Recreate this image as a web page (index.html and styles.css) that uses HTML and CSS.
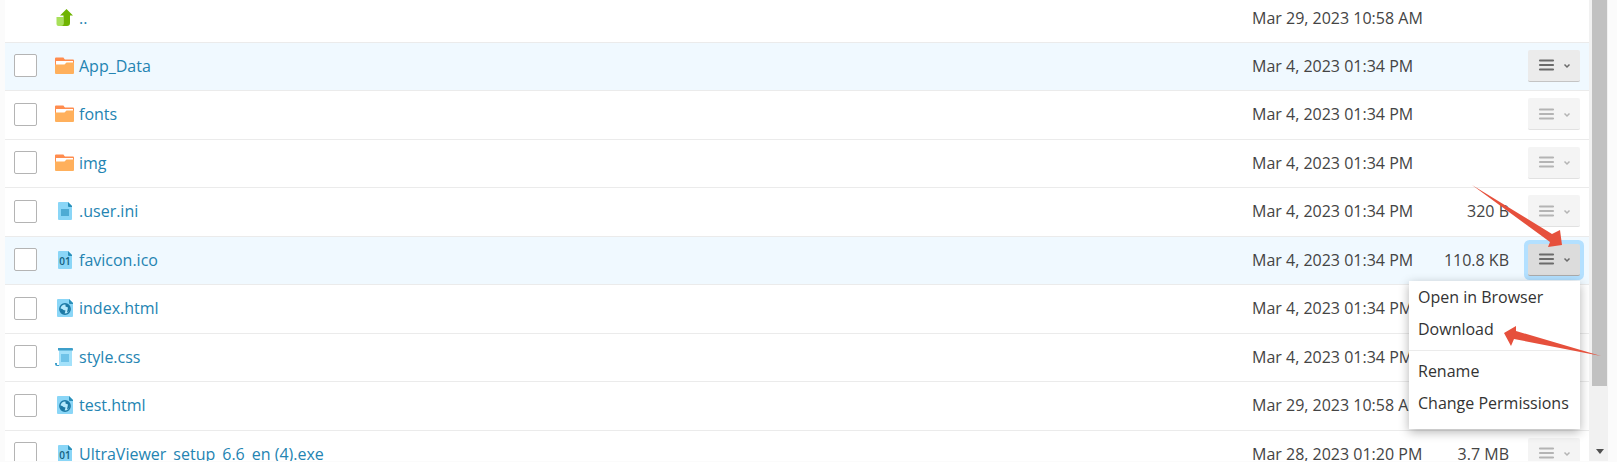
FILE: index.html
```html
<!DOCTYPE html>
<html lang="en">
<head>
    <meta charset="UTF-8">
    <meta name="viewport" content="width=device-width, initial-scale=1.0">
    <title>File Manager</title>
    <link rel="stylesheet" href="styles.css">
</head>
<body>
    <svg class="sprite" aria-hidden="true">
        <symbol id="icon-up" viewBox="0 0 20 20">
            <path d="M1.500 9h7v9H3.500a2 2 0 0 1-2-2z" fill="#a8e05a"/>
            <path d="M11.500 1l6.500 6.500h-3v7.500a3 3 0 0 1-3 3H6c2 0 2.500-1 2.500-3V7.500H5z" fill="#6fb400"/>
        </symbol>
        <symbol id="icon-folder" viewBox="0 0 20 20">
            <path d="M0 2.500a1 1 0 0 1 1-1h7a1 1 0 0 1 1 1l1 1h8a1 1 0 0 1 1 1v6H0z" fill="#ff8c4e"/>
            <path d="M1 5h17v4H1z" fill="#fff"/>
            <path d="M0 8.500h9.500l2-2H19V17a1 1 0 0 1-1 1H1a1 1 0 0 1-1-1z" fill="#ffb05c"/>
        </symbol>
        <symbol id="icon-file" viewBox="0 0 20 20">
            <path d="M4 1h9l4 4v13a1 1 0 0 1-1 1H4a1 1 0 0 1-1-1V2a1 1 0 0 1 1-1z" fill="#8ad6f7"/>
            <path d="M13 1l4 4v1h-3a1 1 0 0 1-1-1z" fill="#2b8fb9"/>
            <path d="M6 8h8v7H6z" fill="#4eabd4"/>
        </symbol>
        <symbol id="icon-binary" viewBox="0 0 20 20">
            <path d="M4 1h9l4 4v13a1 1 0 0 1-1 1H4a1 1 0 0 1-1-1V2a1 1 0 0 1 1-1z" fill="#8ad6f7"/>
            <path d="M13 1l4 4v1h-3a1 1 0 0 1-1-1z" fill="#2b8fb9"/>
            <text class="icon-text" x="10" y="15" text-anchor="middle">01</text>
        </symbol>
        <symbol id="icon-html" viewBox="0 0 20 20">
            <path d="M3 1h11l4 4v13a1 1 0 0 1-1 1H3a1 1 0 0 1-1-1V2a1 1 0 0 1 1-1z" fill="#8ad6f7"/>
            <path d="M14 1l4 4v1h-3a1 1 0 0 1-1-1z" fill="#2b8fb9"/>
            <circle cx="10" cy="11" r="5.2" fill="#b5e9fc" stroke="#1c79a5" stroke-width="1.4"/>
            <path d="M5 10.500c1.500 0 2.500.5 3.500 1.500l2 .5-1 3.500c-3 0-4.500-2-4.500-5.500zM10.500 6c2.500 0 4 1.500 4.500 3.500l-.5 3.500-2.500 1.500.5-2.500.5-2.500-2.500-1z" fill="#1c79a5"/>
        </symbol>
        <symbol id="icon-css" viewBox="0 0 20 20">
            <path d="M4 3h13v16H3c1.500-1 1-2 1-3z" fill="#a3e1fa"/>
            <path d="M3 1h14a1 1 0 0 1 1 1v1.500H3zM0 16h2v2h2v1H2a2 2 0 0 1-2-2z" fill="#3d9fca"/>
            <path d="M6 7h8v8H6z" fill="#6fc3e8"/>
        </symbol>
        <symbol id="icon-menu" viewBox="0 0 34 14">
            <path d="M3 2.500h13M3 7h13M3 11.500h13" stroke="currentColor" stroke-width="2.200" stroke-linecap="round"/>
            <path d="M27.500 6.500L30 9l2.500-2.500" fill="none" stroke="currentColor" stroke-width="1.500"/>
        </symbol>
    </svg>

    <div class="file-manager">
        <div class="list">
            <table class="files">
                <colgroup>
                    <col class="col-check">
                    <col>
                    <col class="col-date">
                    <col class="col-size">
                    <col class="col-actions">
                </colgroup>
                <tbody>
                    <tr class="parent">
                        <td></td>
                        <td><a class="name" href="#"><svg class="icon"><use href="#icon-up"/></svg>..</a></td>
                        <td>Mar 29, 2023 10:58 AM</td>
                        <td class="size"></td>
                        <td></td>
                    </tr>
                    <tr class="active">
                        <td><input class="check" type="checkbox" aria-label="App_Data"></td>
                        <td><a class="name" href="#"><svg class="icon"><use href="#icon-folder"/></svg>App_Data</a></td>
                        <td>Mar 4, 2023 01:34 PM</td>
                        <td class="size"></td>
                        <td class="actions"><button class="menu-button" type="button" aria-label="Actions"><svg><use href="#icon-menu"/></svg></button></td>
                    </tr>
                    <tr>
                        <td><input class="check" type="checkbox" aria-label="fonts"></td>
                        <td><a class="name" href="#"><svg class="icon"><use href="#icon-folder"/></svg>fonts</a></td>
                        <td>Mar 4, 2023 01:34 PM</td>
                        <td class="size"></td>
                        <td class="actions"><button class="menu-button" type="button" aria-label="Actions"><svg><use href="#icon-menu"/></svg></button></td>
                    </tr>
                    <tr>
                        <td><input class="check" type="checkbox" aria-label="img"></td>
                        <td><a class="name" href="#"><svg class="icon"><use href="#icon-folder"/></svg>img</a></td>
                        <td>Mar 4, 2023 01:34 PM</td>
                        <td class="size"></td>
                        <td class="actions"><button class="menu-button" type="button" aria-label="Actions"><svg><use href="#icon-menu"/></svg></button></td>
                    </tr>
                    <tr>
                        <td><input class="check" type="checkbox" aria-label=".user.ini"></td>
                        <td><a class="name" href="#"><svg class="icon"><use href="#icon-file"/></svg>.user.ini</a></td>
                        <td>Mar 4, 2023 01:34 PM</td>
                        <td class="size">320 B</td>
                        <td class="actions"><button class="menu-button" type="button" aria-label="Actions"><svg><use href="#icon-menu"/></svg></button></td>
                    </tr>
                    <tr class="active">
                        <td><input class="check" type="checkbox" aria-label="favicon.ico"></td>
                        <td><a class="name" href="#"><svg class="icon"><use href="#icon-binary"/></svg>favicon.ico</a></td>
                        <td>Mar 4, 2023 01:34 PM</td>
                        <td class="size">110.8 KB</td>
                        <td class="actions">
                            <div class="dropdown">
                                <button class="menu-button open" type="button" aria-label="Actions" aria-expanded="true"><svg><use href="#icon-menu"/></svg></button>
                                <ul class="menu">
                                    <li><a href="#">Open in Browser</a></li>
                                    <li><a href="#">Download</a></li>
                                    <li class="divider"></li>
                                    <li><a href="#">Rename</a></li>
                                    <li><a href="#">Change Permissions</a></li>
                                </ul>
                            </div>
                        </td>
                    </tr>
                    <tr>
                        <td><input class="check" type="checkbox" aria-label="index.html"></td>
                        <td><a class="name" href="#"><svg class="icon"><use href="#icon-html"/></svg>index.html</a></td>
                        <td>Mar 4, 2023 01:34 PM</td>
                        <td class="size"></td>
                        <td></td>
                    </tr>
                    <tr>
                        <td><input class="check" type="checkbox" aria-label="style.css"></td>
                        <td><a class="name" href="#"><svg class="icon"><use href="#icon-css"/></svg>style.css</a></td>
                        <td>Mar 4, 2023 01:34 PM</td>
                        <td class="size"></td>
                        <td></td>
                    </tr>
                    <tr>
                        <td><input class="check" type="checkbox" aria-label="test.html"></td>
                        <td><a class="name" href="#"><svg class="icon"><use href="#icon-html"/></svg>test.html</a></td>
                        <td>Mar 29, 2023 10:58 AM</td>
                        <td class="size"></td>
                        <td></td>
                    </tr>
                    <tr>
                        <td><input class="check" type="checkbox" aria-label="UltraViewer_setup_6.6_en (4).exe"></td>
                        <td><a class="name" href="#"><svg class="icon"><use href="#icon-binary"/></svg>UltraViewer_setup_6.6_en (4).exe</a></td>
                        <td>Mar 28, 2023 01:20 PM</td>
                        <td class="size">3.7 MB</td>
                        <td class="actions"><button class="menu-button" type="button" aria-label="Actions"><svg><use href="#icon-menu"/></svg></button></td>
                    </tr>
                </tbody>
            </table>
        </div>
        <div class="scrollbar">
            <div class="thumb"></div>
            <div class="scroll-down"></div>
        </div>
    </div>

    <svg class="arrows" viewBox="0 0 160 180" aria-hidden="true">
        <path d="M15 5L95 54L103 50L105 65L91 67L93 62z"/>
        <path d="M144 176L59 151V146L47 153L54 166L57 159z"/>
    </svg>
</body>
</html>
```
FILE: styles.css
```css
* {
    box-sizing: border-box;
}

body {
    background-color: #fbfbfb;
    color: #444;
    font-family: 'Open Sans', sans-serif;
    font-size: 16px;
    line-height: 24px;
    margin: 0;
    overflow: hidden;
}

a {
    color: #2484b2;
    text-decoration: none;
}

.sprite {
    display: none;
}

.file-manager {
    display: flex;
    height: 100vh;
    padding: 0 9px 1px 5px;
}

.list {
    flex: 1;
    overflow: hidden;
    background-color: #fff;
}

.files {
    width: 100%;
    table-layout: fixed;
    border-collapse: separate;
    border-spacing: 0;
}

.files tr {
    height: 49px;
}

.files tr:nth-child(even) {
    height: 48px;
}

.files .parent {
    height: 43px;
}

.files td {
    padding: 0 10px 2px;
    border-bottom: 1px solid #ebebeb;
    white-space: nowrap;
    vertical-align: middle;
}

.files .parent td {
    padding-bottom: 6px;
}

.files td:first-child {
    padding-left: 9px;
}

.files td:nth-child(2) {
    padding-left: 0;
}

.files .active td {
    background-color: #f0f9ff;
}

.files .size {
    text-align: right;
}

.files .actions {
    padding-left: 9px;
    padding-right: 9px;
}

.col-check {
    width: 50px;
}

.col-date {
    width: 187px;
}

.col-size {
    width: 90px;
}

.col-actions {
    width: 70px;
}

.check {
    appearance: none;
    display: block;
    width: 23px;
    height: 23px;
    margin: 0;
    border: 1px solid #b4b4b4;
    border-radius: 2px;
    background-color: #fff;
}

.name {
    display: flex;
    align-items: center;
    gap: 4px;
}

.icon {
    width: 20px;
    height: 20px;
}

.icon-text {
    fill: #14607f;
    font-family: 'Open Sans', sans-serif;
    font-size: 10px;
    font-weight: 600;
}

.menu-button {
    display: block;
    width: 52px;
    height: 32px;
    padding: 0 9px;
    border: none;
    border-bottom: 1px solid #c4c4c4;
    border-radius: 2px;
    background-color: #ebebeb;
    color: #6b6b6b;
    opacity: 0.5;
}

.menu-button svg {
    display: block;
    width: 34px;
    height: 14px;
}

.active .menu-button {
    opacity: 1;
}

.active .menu-button.open {
    background-color: #dcdcdc;
    border-bottom-color: #aaa;
    box-shadow: 0 0 0 4px #b3e0ff;
}

.dropdown {
    position: relative;
}

.menu {
    position: absolute;
    top: 37px;
    right: 0;
    z-index: 1;
    min-width: 171px;
    margin: 0;
    padding: 0 0 10px;
    list-style: none;
    background-color: #fff;
    box-shadow: 0 3px 10px rgba(0, 0, 0, 0.3);
}

.menu a {
    display: block;
    padding: 4px 9px;
    color: #333;
}

.menu .divider {
    height: 1px;
    margin: 5px 0 4px;
    background-color: #ebebeb;
}

.scrollbar {
    display: flex;
    flex-direction: column;
    justify-content: space-between;
    width: 19px;
    padding: 0 1px 7px 3px;
    background-color: #f1f1f1;
}

.thumb {
    height: 85%;
    background-color: #c1c1c1;
}

.scroll-down {
    align-self: center;
    border: 4px solid transparent;
    border-top: 5px solid #505050;
    border-bottom: none;
}

.arrows {
    position: absolute;
    top: 180px;
    right: 0;
    z-index: 2;
    width: 160px;
    height: 180px;
    fill: #e6503c;
    pointer-events: none;
}
```
